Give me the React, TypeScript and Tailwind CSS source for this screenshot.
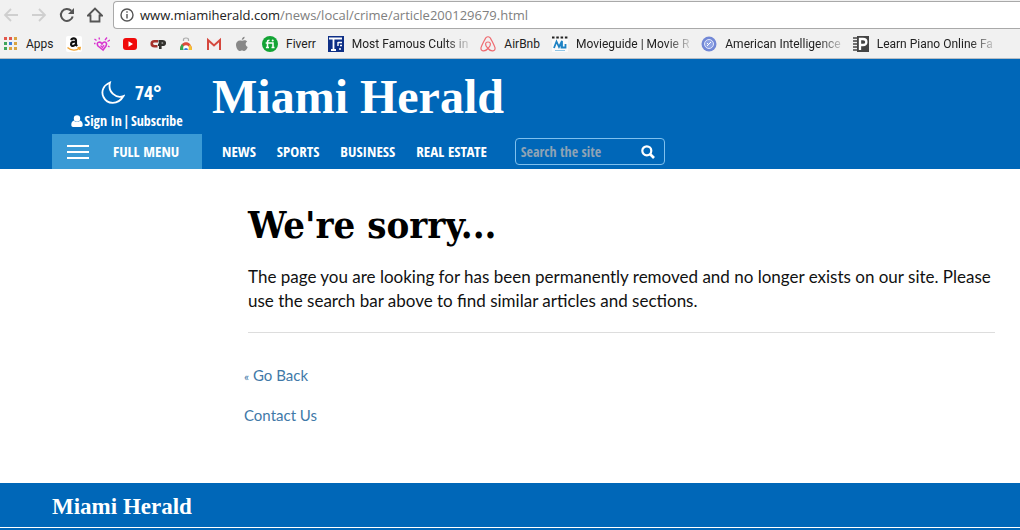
import React from 'react';

const narrowFont = "font-['Open_Sans_Condensed','Liberation_Sans_Narrow','Roboto_Condensed',sans-serif]";

const AppsIcon = () => (
  <svg viewBox="0 0 16 16" className="w-4 h-4 shrink-0">
    {['#e2574c', '#e2574c', '#d9a441', '#3fa45b', '#3b7ddd', '#d9a441', '#3fa45b', '#d9a441', '#d9a441'].map(
      (fill, i) => (
        <rect key={i} x={2 + (i % 3) * 5} y={1 + Math.floor(i / 3) * 5} width="3" height="3" fill={fill} />
      )
    )}
  </svg>
);

const AmazonIcon = () => (
  <svg viewBox="0 0 16 16" className="w-4 h-4 shrink-0">
    <rect width="16" height="16" rx="2" fill="#fff" />
    <path d="M5.2 4.2C5.6 2 10 1.600 10 4.300V8.800L11.200 10M10 5.500C7 5.500 5 6 5 8.200C5 10.700 9 10.400 10 7.500" fill="none" stroke="#111" strokeWidth="2.100" />
    <path d="M1.500 11.500C5 14.800 10.500 14.800 13.500 12.300M11.500 11.700L14.200 11.500L13.700 14" fill="none" stroke="#f3a533" strokeWidth="1.400" />
  </svg>
);

const HeartIcon = () => (
  <svg viewBox="0 0 16 16" className="w-4 h-4 shrink-0" fill="none" stroke="#d935d0" strokeWidth="1.600">
    <path d="M9 14L4 10C1.500 6.500 6 4.500 8 8C9.500 4.500 14 6 12 10Z" />
    <path d="M6.500 9.500L8.500 11.500L10 9M0.500 3L2.500 4.500M5 1.500L5.500 3.500M11 4L13 1.500M13.500 5.500L16 4M0 7.500H1.500M14 10L15.500 11" strokeWidth="1.300" />
  </svg>
);

const YoutubeIcon = () => (
  <svg viewBox="0 0 16 16" className="w-4 h-4 shrink-0">
    <rect x="1" y="2" width="14" height="12" rx="3" fill="#f00a0a" />
    <path d="M6.500 5.300V10.700L11 8Z" fill="#fff" />
  </svg>
);

const CpIcon = () => (
  <svg viewBox="0 0 16 16" className="w-4 h-4 shrink-0" fill="none" strokeWidth="2.600">
    <path d="M8 5.300H4.500C0.800 5.300 0.800 10.200 4.500 10.200H7.500" stroke="#a5322c" />
    <path d="M8 8.800H12.500C15.500 8.800 15.500 5.300 12.500 5.300H8.500M10.300 6V13" stroke="#33322e" />
  </svg>
);

const WebStoreIcon = () => (
  <svg viewBox="0 0 16 16" className="w-4 h-4 shrink-0">
    <path d="M5.500 5V3.500C5.500 1.500 10.500 1.500 10.500 3.500V5" fill="none" stroke="#aaa" strokeWidth="1.200" />
    <path d="M2 5H14V14H2Z" fill="#f4f4f4" />
    <path d="M2 14C2 3.500 14 3.500 14 14Z" fill="#dd4b3e" />
    <path d="M2 14C2 11 3 9 4 8L8 14Z" fill="#35a852" />
    <path d="M8 14L12 8.500C13.500 10 14 12 14 14Z" fill="#f7c331" />
    <circle cx="8" cy="12" r="2.800" fill="#fff" />
    <path d="M6 14A2 2 0 1 1 10 14Z" fill="#3a7be0" />
  </svg>
);

const GmailIcon = () => (
  <svg viewBox="0 0 16 16" className="w-4 h-4 shrink-0">
    <rect x="1" y="3" width="14" height="11" fill="#f3eeee" />
    <path d="M2 14V4L8 9.500L14 4V14" fill="none" stroke="#d5473d" strokeWidth="2" />
  </svg>
);

const AppleIcon = () => (
  <svg viewBox="0 0 16 16" className="w-4 h-4 shrink-0" fill="#888">
    <path d="M8 4.800C10 3.800 12 4 13.200 5.600C11 7.100 11.200 9.900 13.700 11C12.900 13.200 11.600 14.900 10.300 14.900C9.300 14.900 9 14.400 8 14.400C7 14.400 6.600 14.900 5.600 14.900C3.800 14.900 2 11.400 2 8.700C2 5.300 5 3.500 8 4.800Z" />
    <path d="M7.800 3.900C7.800 2.200 9 0.900 10.600 0.800C10.700 2.500 9.500 3.900 7.800 3.900Z" />
  </svg>
);

const FiverrIcon = () => (
  <svg viewBox="0 0 16 16" className="w-4 h-4 shrink-0">
    <circle cx="8" cy="8" r="8" fill="#13a435" />
    <path d="M5.500 12V5.500C5.500 4.500 6.200 4.200 7.500 4.200M3.700 7H11V12M3.900 11.600H7M9.500 11.600H12.500" fill="none" stroke="#fff" strokeWidth="1.500" />
    <circle cx="10.700" cy="4.500" r="1" fill="#fff" />
  </svg>
);

const CultsIcon = () => (
  <svg viewBox="0 0 16 16" className="w-4 h-4 shrink-0">
    <rect width="16" height="16" fill="#0e2f86" />
    <path d="M1 2.500H14M5.500 3V14M3 14H8" fill="none" stroke="#fff" strokeWidth="1.800" />
    <path d="M10 6V10M10 6.500H14M12 9.500H14M11 13H13" fill="none" stroke="#fff" strokeWidth="1.400" />
  </svg>
);

const AirbnbIcon = () => (
  <svg viewBox="0 0 16 16" className="w-4 h-4 shrink-0" fill="none" stroke="#ef6a70" strokeWidth="1.200">
    <path d="M8 12.500C4 8.500 5.500 6 8 6C10.500 6 12 8.500 8 12.500C5 16 0.200 15.500 1 11.700C1.800 9 5.500 2 6.200 1.500C7 0.500 9 0.500 9.800 1.500C10.500 2 14.200 9 15 11.700C15.800 15.500 11 16 8 12.500Z" />
  </svg>
);

const MovieguideIcon = () => (
  <svg viewBox="0 0 16 16" className="w-4 h-4 shrink-0">
    <rect y="3" width="16" height="13" fill="#fafafa" />
    <path d="M0 1.500H16" stroke="#222" strokeWidth="2" strokeDasharray="2.500 1.800" />
    <path d="M2 12L4.500 5.500L7 11L10 5V12M9.500 8.500V11.500H13.500V8" fill="none" stroke="#1f83c4" strokeWidth="1.800" />
    <path d="M3 14.500H13" stroke="#8ec4e6" />
  </svg>
);

const IntelligenceIcon = () => (
  <svg viewBox="0 0 16 16" className="w-4 h-4 shrink-0">
    <circle cx="8" cy="8" r="7.500" fill="#7288d6" />
    <circle cx="8" cy="8" r="4.500" fill="#8fa3e4" stroke="#e1e7fb" />
    <path d="M6 10L10 6M6 7L8 9" stroke="#fff" />
  </svg>
);

const PianoIcon = () => (
  <svg viewBox="0 0 16 16" className="w-4 h-4 shrink-0">
    <path d="M4 0H16V16H4Z" fill="#444" />
    <path d="M0 2H5M0 5H5M0 8H5M0 11H5M0 14H5" stroke="#444" strokeWidth="1.400" />
    <path d="M7 14V3H10C14.500 3 14.500 9 10 9H8" fill="none" stroke="#fff" strokeWidth="2.300" />
  </svg>
);

const bookmarks = [
  { name: 'Apps', icon: AppsIcon, label: 'Apps' },
  { name: 'Amazon', icon: AmazonIcon },
  { name: 'Favorites', icon: HeartIcon },
  { name: 'YouTube', icon: YoutubeIcon },
  { name: 'CP', icon: CpIcon },
  { name: 'Web Store', icon: WebStoreIcon },
  { name: 'Gmail', icon: GmailIcon },
  { name: 'Apple', icon: AppleIcon },
  { name: 'Fiverr', icon: FiverrIcon, label: 'Fiverr' },
  { name: 'Cults', icon: CultsIcon, label: 'Most Famous Cults in', faded: true },
  { name: 'AirBnb', icon: AirbnbIcon, label: 'AirBnb' },
  { name: 'Movieguide', icon: MovieguideIcon, label: 'Movieguide | Movie R', faded: true },
  { name: 'Intelligence', icon: IntelligenceIcon, label: 'American Intelligence', faded: true },
  { name: 'Piano', icon: PianoIcon, label: 'Learn Piano Online Fa', faded: true },
];

const BrowserBar = () => (
  <div className="bg-[#f1f1f1] border-b border-[#b5bcc4] text-[#222]">
    <div className="flex items-center h-[30px]">
      <div className="flex items-center gap-3 pl-[3px] pr-[10px]">
        <button aria-label="Back" className="w-4 h-4">
          <svg viewBox="0 0 16 16" fill="none" stroke="#cfcfcf" strokeWidth="1.800">
            <path d="M15 8H2M8 2L2 8L8 14" />
          </svg>
        </button>
        <button aria-label="Forward" className="w-4 h-4">
          <svg viewBox="0 0 16 16" fill="none" stroke="#cfcfcf" strokeWidth="1.800">
            <path d="M1 8H14M8 2L14 8L8 14" />
          </svg>
        </button>
        <button aria-label="Reload" className="w-4 h-4">
          <svg viewBox="0 0 16 16" fill="none" stroke="#555" strokeWidth="2">
            <path d="M13.700 9.500A6 6 0 1 1 12.300 3.800" />
            <path d="M15 1V7H9Z" fill="#555" stroke="none" />
          </svg>
        </button>
        <button aria-label="Home" className="w-4 h-4">
          <svg viewBox="0 0 16 16" fill="none" stroke="#555" strokeWidth="1.800">
            <path d="M1 8.500L8 1.500L15 8.500H12.500V14.500H3.500V8.500Z" />
          </svg>
        </button>
      </div>
      <div className="flex flex-1 items-center gap-[6px] h-7 pl-[6px] bg-white border border-r-0 border-[#a9a9a9] rounded-l">
        <svg viewBox="0 0 14 14" className="w-[14px] h-[14px]" fill="none" stroke="#555" strokeWidth="1.400">
          <circle cx="7" cy="7" r="6" />
          <path d="M7 6V10.500M7 3.300V4.800" />
        </svg>
        <div className="text-[13px] leading-5 font-['Open_Sans','Noto_Sans',sans-serif]">
          www.miamiherald.com<span className="text-[#808080]">/news/local/crime/article200129679.html</span>
        </div>
      </div>
    </div>
    <div className="flex items-center gap-3 h-7 pl-[2px] font-['Roboto',sans-serif]">
      {bookmarks.map(({ name, icon: Icon, label, faded }) => (
        <a key={name} href="#" aria-label={name} className="flex items-center gap-2 shrink-0 text-xs whitespace-nowrap">
          <Icon />
          {label && (
            <span
              className={
                faded
                  ? '[mask-image:linear-gradient(to_right,black_80%,rgb(0_0_0/0.2))]'
                  : 'min-w-7'
              }
            >
              {label}
            </span>
          )}
        </a>
      ))}
    </div>
  </div>
);

const Wordmark = ({ className }: { className: string }) => (
  <a href="#" className={`font-bold whitespace-nowrap font-['Liberation_Serif',serif] ${className}`}>
    Miami Herald
  </a>
);

const navItems = ['NEWS', 'SPORTS', 'BUSINESS', 'REAL ESTATE'];

const Header = () => (
  <header className={`flex gap-[10px] pl-[52px] bg-[#0067b8] text-white font-bold ${narrowFont}`}>
    <div className="w-[150px] shrink-0">
      <div className="flex flex-col items-center h-[75px] pt-[22px]">
        <div className="flex items-center gap-[10px] pl-2 text-xl leading-6">
          <svg viewBox="0 0 24 24" className="w-6 h-6" fill="none" stroke="#fff" strokeWidth="1.800">
            <path d="M9 1.500C3 4 -0.500 10 2.500 16C6 23.500 17 24.500 22.500 15C15 18 6.500 11 9 1.500Z" />
          </svg>
          74°
        </div>
        <div className="flex items-center mt-1 text-sm leading-6 whitespace-nowrap">
          <svg viewBox="0 0 12 12" className="w-3 h-3 mr-[1px]" fill="#fff">
            <circle cx="6" cy="3.500" r="3.200" />
            <path d="M3 5.500C0.800 6 0.300 8 0.300 10C0.300 11.300 1 12 2 12H10C11 12 11.700 11.300 11.700 10C11.700 8 11.200 6 9 5.500C7.500 7.500 4.500 7.500 3 5.500Z" />
          </svg>
          <a href="#">Sign In</a>
          <span className="px-[1px]">|</span>
          <a href="#">Subscribe</a>
        </div>
      </div>
      <button className="flex items-center w-full h-[35px] pl-[15px] gap-6 bg-[#3a9ad5] text-[15px]">
        <svg viewBox="0 0 22 14" className="w-[22px] h-[14px]" stroke="#fff" strokeWidth="2">
          <path d="M0 1H22M0 7H22M0 13H22" />
        </svg>
        FULL MENU
      </button>
    </div>
    <div className="flex-1">
      <div className="flex items-center h-[75px]">
        <Wordmark className="text-5xl leading-[48px]" />
      </div>
      <div className="flex items-center h-[35px] pl-[10px]">
        <nav className="flex gap-[21px] text-[15px] whitespace-nowrap">
          {navItems.map((item) => (
            <a key={item} href="#">
              {item}
            </a>
          ))}
        </nav>
        <form className="flex items-center w-[150px] h-[27px] ml-7 px-[5px] border border-[#7fc0ee] rounded">
          <input
            type="text"
            aria-label="Search the site"
            placeholder="Search the site"
            className="flex-1 min-w-0 text-sm font-bold outline-none placeholder:text-[#8fa3b5]"
          />
          <button type="button" aria-label="Search" className="w-[14px] h-[14px] mr-1">
            <svg viewBox="0 0 14 14" fill="none" stroke="#fff" strokeWidth="2.200">
              <circle cx="5.800" cy="5.800" r="4.500" />
              <path d="M9 9L13 13" strokeWidth="2.600" />
            </svg>
          </button>
        </form>
      </div>
    </div>
  </header>
);

const App: React.FC = () => (
  <div className="min-h-screen bg-white">
    <BrowserBar />
    <Header />
    <main className="pt-8 pb-14 pl-[244px] pr-[25px] font-['Lato',sans-serif]">
      <div className="pl-1">
        <h1 className="text-[38px] leading-[48px] font-bold text-black font-['DejaVu_Serif_Condensed','DejaVu_Serif',serif]">
          We're sorry...
        </h1>
        <p className="mt-4 pb-[19px] text-[17px] leading-6 text-[#111] border-b border-[#ddd]">
          The page you are looking for has been permanently removed and no longer exists on our site. Please use the
          search bar above to find similar articles and sections.
        </p>
      </div>
      <div className="flex flex-col items-start gap-4 mt-[30px] text-[15px] leading-6 text-[#4179a8]">
        <a href="#">
          <span className="text-xs">«</span> Go Back
        </a>
        <a href="#">Contact Us</a>
      </div>
    </main>
    <footer className="pb-[2px] bg-[#0067b8] text-white">
      <div className="flex items-center h-[45px] pt-1 pl-[52px] border-b border-white">
        <Wordmark className="text-[23px] leading-6" />
      </div>
    </footer>
  </div>
);

export default App;
